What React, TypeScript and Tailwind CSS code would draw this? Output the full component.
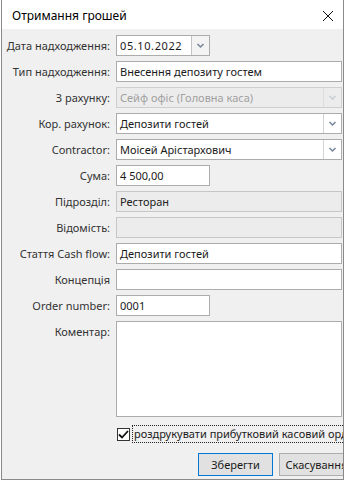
const font = { fontFamily: '"Noto Sans", "Open Sans", sans-serif' }

function Chevron({ disabled }: { disabled?: boolean }) {
  return (
    <svg width="9" height="6" viewBox="0 0 9 6" className="block">
      <polyline
        points="1.5,1 4.5,4 7.5,1"
        fill="none"
        stroke={disabled ? '#c8ccd2' : '#75849a'}
        strokeWidth="1.5"
      />
    </svg>
  )
}

function Label({ text }: { text: string }) {
  return (
    <div className="w-[108px] shrink-0 text-right text-[11px] text-[#333] leading-[21px] whitespace-nowrap">
      {text}
    </div>
  )
}

function Row({ label, children }: { label: string; children: React.ReactNode }) {
  return (
    <div className="flex items-start gap-[6px] h-[21px] mb-[5px]">
      <Label text={label} />
      {children}
    </div>
  )
}

function TextBox({ value, short, disabled }: { value?: string; short?: boolean; disabled?: boolean }) {
  return (
    <div
      className={
        'h-[21px] border px-[3px] text-[11px] leading-[19px] whitespace-nowrap overflow-hidden ' +
        (short ? 'w-[94px] ' : 'flex-1 ') +
        (disabled ? 'bg-[#ececec] border-[#c6c6c6] text-[#222]' : 'bg-white border-[#acacac] text-[#1a1a1a]')
      }
    >
      {value}
    </div>
  )
}

function Combo({ value, disabled }: { value: string; disabled?: boolean }) {
  return (
    <div
      className={
        'flex-1 h-[21px] border flex ' +
        (disabled ? 'bg-[#ececec] border-[#cfcfcf]' : 'bg-white border-[#acacac]')
      }
    >
      <div
        className={
          'flex-1 px-[3px] text-[11px] leading-[19px] whitespace-nowrap overflow-hidden ' +
          (disabled ? 'text-[#a0a0a0]' : 'text-[#1a1a1a]')
        }
      >
        {value}
      </div>
      <div
        className={
          'w-[18px] border-l flex items-center justify-center ' +
          (disabled ? 'border-[#dcdcdc]' : 'border-[#d4d4d4]')
        }
      >
        <Chevron disabled={disabled} />
      </div>
    </div>
  )
}

export default function App() {
  return (
    <div className="w-[345px] h-[482px] bg-white overflow-hidden" style={font}>
      <div className="ml-px w-[343px] h-[480px] border-l border-r border-b border-[#8a8a8a] flex flex-col overflow-hidden">
        {/* title bar */}
        <div className="h-[29px] shrink-0 bg-white flex items-center justify-between pl-[10px] pr-[8px] pt-[2px]">
          <span className="text-[12px] text-black">Отримання грошей</span>
          <svg width="12" height="12" viewBox="0 0 12 12" className="mr-[1px]">
            <path d="M1 1 L11 11 M11 1 L1 11" stroke="#111" strokeWidth="1" />
          </svg>
        </div>

        {/* body */}
        <div className="flex-1 bg-[#f0f0f0] pt-[6px] pr-[1px] overflow-hidden">
          <Row label="Дата надходження:">
            <div className="w-[94px] h-[21px] border border-[#acacac] bg-white flex">
              <div className="flex-1 px-[3px] text-[11px] leading-[19px] tracking-[0.6px] text-[#1a1a1a]">05.10.2022</div>
              <div className="w-[18px] border-l border-[#c4c4c4] bg-[#f3f3f3] flex items-center justify-center">
                <Chevron />
              </div>
            </div>
          </Row>
          <Row label="Тип надходження:">
            <TextBox value="Внесення депозиту гостем" />
          </Row>
          <Row label="З рахунку:">
            <Combo value="Сейф офіс (Головна каса)" disabled />
          </Row>
          <Row label="Кор. рахунок:">
            <Combo value="Депозити гостей" />
          </Row>
          <Row label="Contractor:">
            <Combo value="Моісей Арістархович" />
          </Row>
          <Row label="Сума:">
            <TextBox value="4 500,00" short />
          </Row>
          <Row label="Підрозділ:">
            <TextBox value="Ресторан" disabled />
          </Row>
          <Row label="Відомість:">
            <TextBox disabled />
          </Row>
          <Row label="Стаття Cash flow:">
            <TextBox value="Депозити гостей" />
          </Row>
          <Row label="Концепція">
            <TextBox />
          </Row>
          <Row label="Order number:">
            <TextBox value="0001" short />
          </Row>

          <div className="flex items-start gap-[6px]">
            <div className="w-[108px] shrink-0 text-right text-[11px] text-[#333] leading-[19px] pt-[1px] whitespace-nowrap">
              Коментар:
            </div>
            <div className="flex-1 h-[96px] bg-white border border-[#acacac]" />
          </div>

          {/* checkbox */}
          <div className="flex items-center mt-[7px] ml-[115px] h-[20px]">
            <div className="w-[13px] h-[13px] shrink-0 border border-[#333] bg-white flex items-center justify-center">
              <svg width="11" height="9" viewBox="0 0 11 9">
                <polyline points="1,4.5 4,7.5 10,1" fill="none" stroke="#111" strokeWidth="1.8" />
              </svg>
            </div>
            <div className="ml-[2px] px-[1px] border border-dotted border-[#222] text-[11px] leading-[16px] text-[#1a1a1a] whitespace-nowrap">
              роздрукувати прибутковий касовий ордер
            </div>
          </div>

          {/* buttons */}
          <div className="flex gap-[6px] mt-[9px] ml-[196px]">
            <div className="w-[75px] h-[23px] shrink-0 border border-[#0078d7] bg-[#e1e1e1] text-[11px] leading-[21px] text-center text-[#1a1a1a]">
              Зберегти
            </div>
            <div className="w-[75px] h-[23px] shrink-0 border border-[#adadad] bg-[#e1e1e1] text-[11px] leading-[21px] text-center text-[#1a1a1a] whitespace-nowrap">
              Скасування
            </div>
          </div>
        </div>
      </div>
    </div>
  )
}
